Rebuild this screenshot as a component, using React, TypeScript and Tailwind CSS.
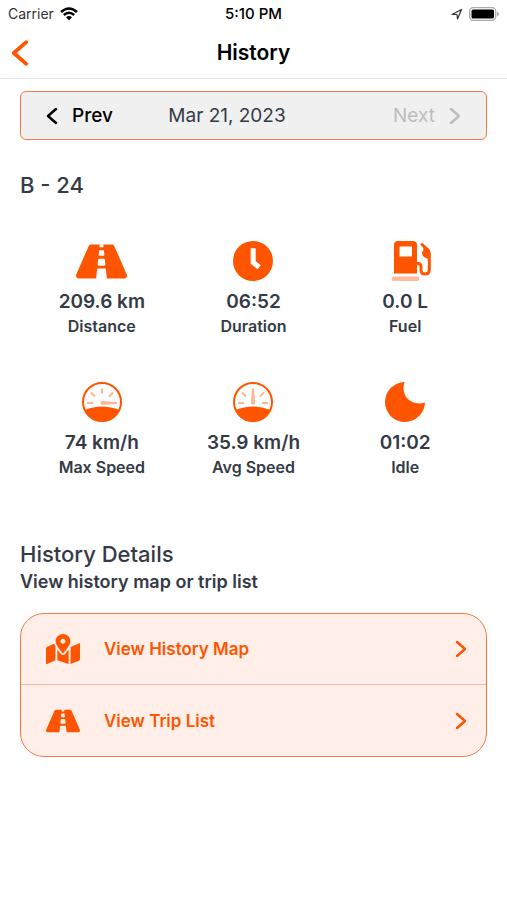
import React from 'react';
import { FaMapMarkedAlt, FaRoad } from 'react-icons/fa';

const ClockIcon: React.FC = () => (
  <svg width="40" height="40" viewBox="0 0 40 40" aria-hidden="true">
    <circle cx="20" cy="20" r="20" fill="#ff5500" />
    <path d="M20.2 7.3V21.5L26.2 26.3" fill="none" stroke="#fff" strokeWidth="5" />
  </svg>
);

const FuelIcon: React.FC = () => (
  <svg width="53" height="40" viewBox="-13 0 53 40" aria-hidden="true">
    <path
      fillRule="evenodd"
      fill="#ff5500"
      d="M6 0H21Q25 0 25 4V32.5H2V4Q2 0 6 0ZM7.5 5.5V15.5H20V5.5Z"
    />
    <path
      d="M24 22.5H26Q29 22.5 29 25.5V29Q29 33 33 33Q37.3 33 37.3 29V13Q37.3 10.5 36 9L30 3.5"
      fill="none"
      stroke="#ff5500"
      strokeWidth="3"
      strokeLinecap="round"
    />
    <path d="M31 4.5L38 10V17.5H36Q30 16.5 30 11.500L31.500 9Z" fill="#ff5500" />
    <rect x="0" y="35.5" width="27" height="4.5" rx="1" fill="#ffbb9e" />
  </svg>
);

const GaugeIcon: React.FC<{ high?: boolean }> = ({ high }) => (
  <svg width="40" height="40" viewBox="0 0 40 40" aria-hidden="true">
    <circle cx="20" cy="20" r="19" fill="#fff" stroke="#ff5500" strokeWidth="2" />
    <path d="M2.5 28Q11 24.5 20 24.5T37.5 28A19 19 0 0 1 2.5 28Z" fill="#ff5500" />
    <g stroke="#ffb698" strokeWidth="2">
      <path d="M5 21H11M9 10.5L13 14.5M31 10.5L27 14.5" />
      {high ? <path d="M20 6.5V11.5" /> : <path d="M29 21H35" />}
    </g>
    {high ? (
      <path d="M20 19L35 20V22L20 23Q18.5 23 18.5 21T20 19Z" fill="#ffb698" />
    ) : (
      <path d="M19 6.5H21L22.2 21Q22 22.8 20 22.8T17.8 21Z" fill="#ffb698" />
    )}
  </svg>
);

const MoonIcon: React.FC = () => (
  <svg width="40" height="40" viewBox="0 0 40 40" aria-hidden="true">
    <path
      d="M19.5 0A20 20 0 1 0 40 20.5C33 22.5 27 21 23 17C18.5 12.5 17.5 6 19.5 0Z"
      fill="#ff5500"
    />
  </svg>
);

const Chevron: React.FC<{ left?: boolean; className: string }> = ({
  left,
  className,
}) => (
  <svg
    viewBox="0 0 12 18"
    className={className}
    fill="none"
    stroke="currentColor"
    strokeWidth="2.4"
    strokeLinecap="round"
    strokeLinejoin="round"
    aria-hidden="true"
  >
    <path d={left ? 'M10 2L2 9L10 16' : 'M2 2L10 9L2 16'} />
  </svg>
);

const stats = [
  { label: 'Distance', value: '209.6 km', icon: <FaRoad size={51} /> },
  { label: 'Duration', value: '06:52', icon: <ClockIcon /> },
  { label: 'Fuel', value: '0.0 L', icon: <FuelIcon /> },
  { label: 'Max Speed', value: '74 km/h', icon: <GaugeIcon high /> },
  { label: 'Avg Speed', value: '35.9 km/h', icon: <GaugeIcon /> },
  { label: 'Idle', value: '01:02', icon: <MoonIcon /> },
];

const links = [
  { label: 'View History Map', href: '#map', icon: <FaMapMarkedAlt size={34} /> },
  { label: 'View Trip List', href: '#trips', icon: <FaRoad size={34} /> },
];

const StatusBar: React.FC = () => (
  <div className="grid h-7 grid-cols-3 items-center px-2 text-black">
    <div className="flex items-center gap-1.5 text-sm text-[#333]">
      <span>Carrier</span>
      <svg width="18" height="14" viewBox="0 0 18 14" aria-hidden="true">
        <g fill="none" stroke="#000" strokeWidth="2.5">
          <path d="M1 5Q9 -2 17 5" />
          <path d="M3.8 8Q9 3.5 14.2 8" />
        </g>
        <path d="M6 10.2Q9 7.8 12 10.2L9 13.5Z" fill="#000" />
      </svg>
    </div>
    <div className="text-center text-[15px] font-medium">5:10 PM</div>
    <div className="flex items-center justify-end gap-1.5">
      <svg width="12" height="12" viewBox="0 0 12 12" aria-hidden="true">
        <path
          d="M1 6.5L10.5 1.5L6.5 11L6 6.5Z"
          fill="none"
          stroke="#333"
          strokeWidth="1.2"
          strokeLinejoin="round"
        />
      </svg>
      <svg width="30" height="14" viewBox="0 0 30 14" aria-hidden="true">
        <rect x="0.7" y="0.7" width="26" height="12.6" rx="3.5" fill="#fff" stroke="#aaa" strokeWidth="1.3" />
        <rect x="2.5" y="2.5" width="22.5" height="9" rx="1.5" fill="#000" />
        <path d="M28 4.5Q30 5.5 30 7T28 9.5Z" fill="#aaa" />
      </svg>
    </div>
  </div>
);

const App: React.FC = () => {
  return (
    <div className="min-h-screen bg-white font-['Inter','Liberation_Sans',sans-serif] text-[#343a46]">
      <StatusBar />

      <header className="grid h-[51px] grid-cols-3 items-center border-b border-[#e4e4e4] px-2.5">
        <button type="button" aria-label="Back" className="w-5 text-[#ff5500]">
          <Chevron left className="h-7 w-5" />
        </button>
        <h1 className="text-center text-[21px] font-semibold text-black">History</h1>
      </header>

      <main className="px-5 pt-3">
        <div className="flex h-[49px] items-center justify-between rounded-md border border-[#f27a45] bg-[#f0f0f0] px-[25px] text-[19px] leading-[30px]">
          <button type="button" className="flex items-center gap-3.5 font-medium text-black">
            <Chevron left className="h-[18px] w-3" />
            Prev
          </button>
          <span className="pr-[52px]">Mar 21, 2023</span>
          <button type="button" disabled className="flex items-center gap-3.5 text-[#bdbdbd]">
            Next
            <Chevron className="h-[18px] w-3" />
          </button>
        </div>

        <h2 className="mt-[31px] text-[22px] leading-7 font-medium">B - 24</h2>

        <div className="mt-10 grid grid-cols-3 gap-y-11 px-1.5">
          {stats.map((stat) => (
            <div key={stat.label} className="flex flex-col items-center">
              <div className="flex h-11 items-center text-[#ff5500]">{stat.icon}</div>
              <div className="mt-[5px] text-[19px] leading-7 font-semibold">{stat.value}</div>
              <div className="text-base leading-5 font-semibold">{stat.label}</div>
            </div>
          ))}
        </div>

        <h2 className="mt-[63px] text-[22px] leading-7 font-medium">History Details</h2>
        <p className="text-lg leading-7 font-semibold">View history map or trip list</p>

        <nav className="mt-[17px] divide-y divide-[#ffb596] overflow-hidden rounded-3xl border border-[#f27a45] bg-[#ffefe8] text-[#ff5500]">
          {links.map((link) => (
            <a
              key={link.label}
              href={link.href}
              className="flex h-[71px] items-center pr-[19px] pl-[25px] text-[17px] leading-7 font-semibold"
            >
              {link.icon}
              <span className="ml-6 flex-1">{link.label}</span>
              <Chevron className="h-[18px] w-3" />
            </a>
          ))}
        </nav>
      </main>
    </div>
  );
};

export default App;
